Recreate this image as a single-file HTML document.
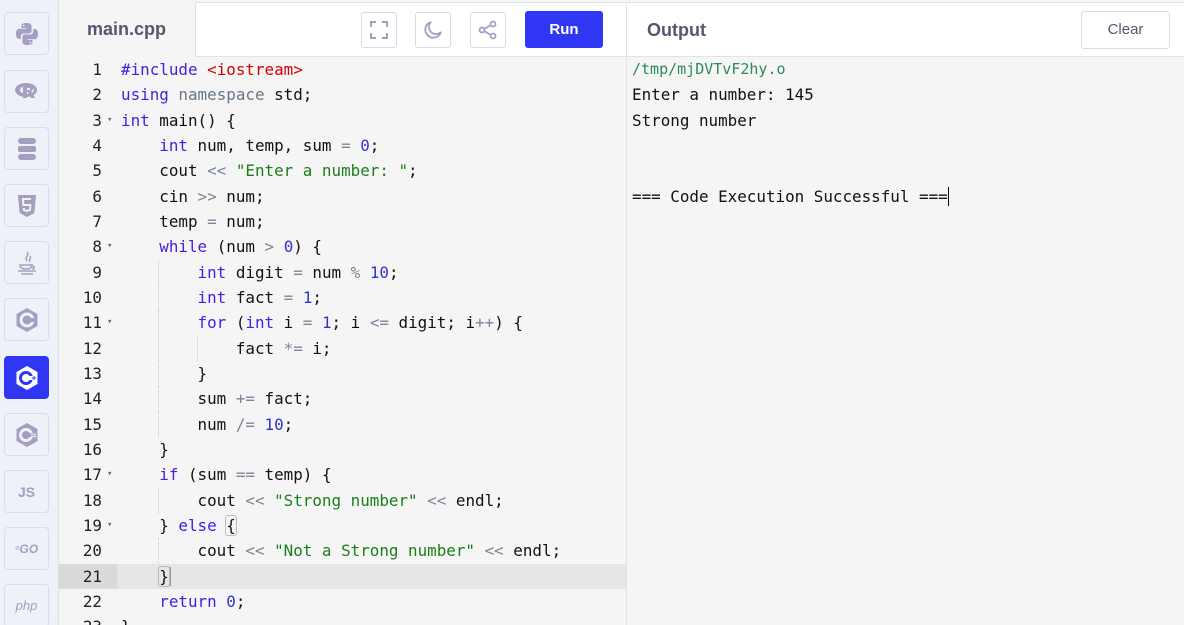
<!DOCTYPE html>
<html><head><style>
*{margin:0;padding:0;box-sizing:border-box}
html,body{width:1184px;height:625px;overflow:hidden}
body{background:#f5f5f5;font-family:"Liberation Sans",sans-serif;position:relative}
.sb{position:absolute;left:0;top:0;width:59px;height:625px;background:#eef2f8;border-right:1px solid #d9e1ec}
.ic{position:absolute;left:4px;width:45px;height:43px;border:1px solid #d5deea;border-radius:4px;background:#eef2f8;display:flex;align-items:center;justify-content:center;color:#a49fc0;font-weight:bold}
.ic.act{background:#2f37f5;border-color:#2f37f5}
.hdr{position:absolute;left:59px;top:2px;width:1125px;height:55px;background:#fff;border-top:1px solid #dde3ee;border-bottom:1px solid #dde3ee}
.tab{position:absolute;left:59px;top:2px;width:137px;height:55px;background:#f5f5f5;border-right:1px solid #dde3ee;font-size:18px;font-weight:bold;color:#5a5470;padding:17px 0 0 28px}
.btn{position:absolute;top:12px;width:36px;height:36px;border:1px solid #d5dce8;border-radius:3px;display:flex;align-items:center;justify-content:center}
.run{position:absolute;left:525px;top:11px;width:78px;height:37px;background:#2f37f5;border-radius:3px;color:#fff;font-weight:bold;font-size:15px;text-align:center;line-height:37px}
.divv{position:absolute;left:626px;top:2px;width:1px;height:623px;background:#dde3ee}
.out{position:absolute;left:647px;top:20px;font-size:18px;font-weight:bold;color:#5a5470}
.clr{position:absolute;left:1081px;top:11px;width:89px;height:38px;border:1px solid #d5dce8;border-radius:3px;background:#fff;color:#5a5470;font-size:15px;text-align:center;line-height:36px}
.code{position:absolute;left:59px;top:57px;width:567px;font-family:"DejaVu Sans Mono","Liberation Mono",monospace;font-size:15.9px;color:#111}
.l{position:relative;height:25.33px;line-height:25.33px;white-space:pre}
.n{position:absolute;left:0;width:43px;text-align:right;color:#222}
.f{position:absolute;left:48px;top:0;font-size:9px;color:#666}
.t{position:absolute;left:62px}
.act21{background:#e6e6e6}
.act21 .g{position:absolute;left:0;top:0;width:58px;height:100%;background:#dadada}
.k{color:#4a1ee0}.m{color:#3333cc}.o{color:#7a869a}.s{color:#1a7f1a}.r{color:#d40000}.ns{color:#667788}
.gd{position:absolute;width:0;border-left:1px dotted #ccc;height:25.33px}
.o2{position:absolute;left:632px;top:57px;font-family:"DejaVu Sans Mono","Liberation Mono",monospace;font-size:15.9px;color:#111}
.o2 div{height:25.33px;line-height:25.33px;white-space:pre}
</style></head><body>
<div class="sb">
<div class="ic" style="top:12px"><svg width="24" height="24" viewBox="0 0 24 24"><path d="M11.5 1C6 1 6.5 3.5 6.5 3.5V6h5.2v.8H4.4S1 6.4 1 11.8s3 5.2 3 5.2h1.8v-2.5s-.1-3 2.9-3h5.1s2.8 0 2.8-2.7V4.3S17 1 11.5 1zm-2.8 1.6a.9.9 0 110 1.8.9.9 0 010-1.8z M12.5 23c5.5 0 5-2.5 5-2.5V18h-5.2v-.8h7.3s3.4.4 3.4-5-3-5.2-3-5.2h-1.8v2.5s.1 3-2.9 3H10.2s-2.8 0-2.8 2.7v4.5S7 23 12.5 23zm2.8-1.6a.9.9 0 110-1.8.9.9 0 010 1.8z" fill="#a49fc0"/></svg></div>
<div class="ic" style="top:70px"><svg width="26" height="22" viewBox="0 0 26 22"><ellipse cx="12" cy="9" rx="11" ry="7" fill="#a49fc0"/><ellipse cx="13" cy="9" rx="7" ry="4" fill="#eef2f8"/><path d="M9 5h8c3 0 3 5 0 5l4 7h-4l-3-6h-1v6H9z" fill="#a49fc0"/><rect x="13" y="7" width="3" height="2" fill="#eef2f8"/></svg></div>
<div class="ic" style="top:127px"><svg width="20" height="24" viewBox="0 0 20 24"><rect x="1" y="1" width="18" height="6" rx="3" fill="#a49fc0"/><rect x="1" y="9" width="18" height="6" rx="2" fill="#a49fc0"/><rect x="1" y="17" width="18" height="6" rx="3" fill="#a49fc0"/></svg></div>
<div class="ic" style="top:184px"><svg width="20" height="24" viewBox="0 0 20 24"><path d="M1 1h18l-1.6 18L10 23l-7.4-4z" fill="#a49fc0"/><path d="M14 5H6l.4 6h7l-.4 5-3 1-3-1-.2-2" stroke="#eef2f8" stroke-width="2" fill="none"/></svg></div>
<div class="ic" style="top:241px"><svg width="22" height="26" viewBox="0 0 22 26"><path d="M11 2c3 3-3 5 0 9M14 6c2 2-2 3 0 6" stroke="#a49fc0" stroke-width="1.5" fill="none"/><path d="M4 15h12c0 3-3 4-6 4s-6-1-6-4zM16 16c3 0 3 3 0 3M2 21h18M5 24h12" stroke="#a49fc0" stroke-width="1.6" fill="none"/></svg></div>
<div class="ic" style="top:298px"><svg width="24" height="26" viewBox="0 0 24 26"><path d="M12 1l10.5 6v12L12 25 1.5 19V7z" fill="#a49fc0"/><circle cx="12" cy="13" r="6" fill="none" stroke="#eef2f8" stroke-width="3"/><rect x="15" y="11" width="5" height="4" fill="#a49fc0"/></svg></div>
<div class="ic act" style="top:356px"><svg width="24" height="26" viewBox="0 0 24 26"><path d="M12 1l10.5 6v12L12 25 1.5 19V7z" fill="#fff"/><circle cx="11" cy="13" r="5.5" fill="none" stroke="#2f37f5" stroke-width="3"/><rect x="14" y="11" width="4" height="4" fill="#fff"/><path d="M17 13h4M19 11v4" stroke="#2f37f5" stroke-width="1"/></svg></div>
<div class="ic" style="top:413px"><svg width="24" height="26" viewBox="0 0 24 26"><path d="M12 1l10.5 6v12L12 25 1.5 19V7z" fill="#a49fc0"/><circle cx="11" cy="13" r="5.5" fill="none" stroke="#eef2f8" stroke-width="3"/><rect x="14" y="11" width="4" height="4" fill="#a49fc0"/><path d="M17 11v5M20 11v5M16 12.5h5M16 14.5h5" stroke="#eef2f8" stroke-width=".8"/></svg></div>
<div class="ic" style="top:470px;font-size:14px">JS</div>
<div class="ic" style="top:527px;font-size:12px;font-style:italic"><span style="font-size:8px">=</span>GO</div>
<div class="ic" style="top:584px;font-size:13px;font-style:italic;font-weight:normal">php</div>
</div>
<div class="hdr"></div>
<div class="tab">main.cpp</div>
<div class="btn" style="left:361px"><svg width="18" height="18" viewBox="0 0 18 18" fill="none" stroke="#a49fc0" stroke-width="2"><path d="M1 6V1h5M12 1h5v5M17 12v5h-5M6 17H1v-5"/></svg></div>
<div class="btn" style="left:415px"><svg width="20" height="20" viewBox="0 0 20 20" fill="none" stroke="#a49fc0" stroke-width="1.8"><path d="M8 2a8 8 0 1010 10A7 7 0 018 2z"/></svg></div>
<div class="btn" style="left:470px"><svg width="20" height="20" viewBox="0 0 20 20" fill="none" stroke="#a49fc0" stroke-width="1.8"><circle cx="15" cy="4" r="2.5"/><circle cx="4" cy="10" r="2.5"/><circle cx="15" cy="16" r="2.5"/><path d="M6 9l7-4M6 11l7 4"/></svg></div>
<div class="run">Run</div>
<div class="divv"></div>
<div class="out">Output</div>
<div class="clr">Clear</div>
<div class="code">
<div class="l"><span class="n">1</span><span class="t"><span class="k">#include</span> <span class="r">&lt;iostream&gt;</span></span></div>
<div class="l"><span class="n">2</span><span class="t"><span class="k">using</span> <span class="ns">namespace</span> std;</span></div>
<div class="l"><span class="n">3</span><span class="f">▾</span><span class="t"><span class="k">int</span> main() {</span></div>
<div class="l"><span class="n">4</span><span class="t">    <span class="k">int</span> num, temp, sum <span class="o">=</span> <span class="m">0</span>;</span></div>
<div class="l"><span class="n">5</span><span class="t">    cout <span class="o">&lt;&lt;</span> <span class="s">"Enter a number: "</span>;</span></div>
<div class="l"><span class="n">6</span><span class="t">    cin <span class="o">&gt;&gt;</span> num;</span></div>
<div class="l"><span class="n">7</span><span class="t">    temp <span class="o">=</span> num;</span></div>
<div class="l"><span class="n">8</span><span class="f">▾</span><span class="t">    <span class="k">while</span> (num <span class="o">&gt;</span> <span class="m">0</span>) {</span></div>
<div class="l"><span class="gd" style="left:99px"></span><span class="n">9</span><span class="t">        <span class="k">int</span> digit <span class="o">=</span> num <span class="o">%</span> <span class="m">10</span>;</span></div>
<div class="l"><span class="gd" style="left:99px"></span><span class="n">10</span><span class="t">        <span class="k">int</span> fact <span class="o">=</span> <span class="m">1</span>;</span></div>
<div class="l"><span class="gd" style="left:99px"></span><span class="n">11</span><span class="f">▾</span><span class="t">        <span class="k">for</span> (<span class="k">int</span> i <span class="o">=</span> <span class="m">1</span>; i <span class="o">&lt;=</span> digit; i<span class="o">++</span>) {</span></div>
<div class="l"><span class="gd" style="left:99px"></span><span class="gd" style="left:138px"></span><span class="n">12</span><span class="t">            fact <span class="o">*=</span> i;</span></div>
<div class="l"><span class="gd" style="left:99px"></span><span class="n">13</span><span class="t">        }</span></div>
<div class="l"><span class="gd" style="left:99px"></span><span class="n">14</span><span class="t">        sum <span class="o">+=</span> fact;</span></div>
<div class="l"><span class="gd" style="left:99px"></span><span class="n">15</span><span class="t">        num <span class="o">/=</span> <span class="m">10</span>;</span></div>
<div class="l"><span class="n">16</span><span class="t">    }</span></div>
<div class="l"><span class="n">17</span><span class="f">▾</span><span class="t">    <span class="k">if</span> (sum <span class="o">==</span> temp) {</span></div>
<div class="l"><span class="gd" style="left:99px"></span><span class="n">18</span><span class="t">        cout <span class="o">&lt;&lt;</span> <span class="s">"Strong number"</span> <span class="o">&lt;&lt;</span> endl;</span></div>
<div class="l"><span class="n">19</span><span class="f">▾</span><span class="t">    } <span class="k">else</span> <span style="outline:1px solid #bbb;border-radius:2px">{</span></span></div>
<div class="l"><span class="gd" style="left:99px"></span><span class="n">20</span><span class="t">        cout <span class="o">&lt;&lt;</span> <span class="s">"Not a Strong number"</span> <span class="o">&lt;&lt;</span> endl;</span></div>
<div class="l act21"><span class="g"></span><span class="n">21</span><span class="t">    <span style="outline:1px solid #bbb;border-radius:2px">}</span><span style="border-left:2px solid #999"></span></span></div>
<div class="l"><span class="n">22</span><span class="t">    <span class="k">return</span> <span class="m">0</span>;</span></div>
<div class="l"><span class="n">23</span><span class="t">}</span></div>
</div>
<div class="o2">
<div style="color:#2a8a5a;font-size:15px">/tmp/mjDVTvF2hy.o</div>
<div>Enter a number: 145</div>
<div>Strong number</div>
<div> </div>
<div> </div>
<div>=== Code Execution Successful ===<span style="border-left:1px solid #000"></span></div>
</div>
</body></html>
